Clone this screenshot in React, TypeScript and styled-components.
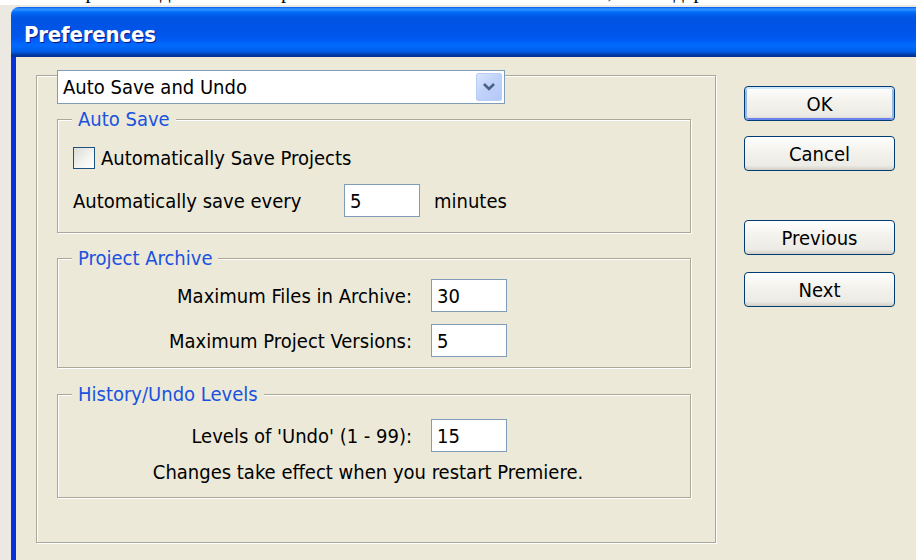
import React, { FC } from 'react';
import styled, { createGlobalStyle } from 'styled-components';

const GlobalStyle = createGlobalStyle`
  html, body {
    margin: 0;
    padding: 0;
    background: #fff;
    overflow: hidden;
  }
`;

const UI_FONT = `"DejaVu Sans Condensed", "DejaVu Sans", "Liberation Sans", sans-serif`;

const Page = styled.div`
  width: 916px;
  height: 560px;
  display: flex;
  flex-direction: column;
  overflow: hidden;
  background: #fff;
`;

// document line above the screenshot, only its descenders stay visible
const DocStrip = styled.div`
  height: 5px;
  overflow: hidden;
  flex-shrink: 0;
`;

const DocLine = styled.div`
  margin-top: -20px;
  padding-left: 52px;
  font-family: "Liberation Serif", serif;
  font-size: 21px;
  line-height: 22px;
  white-space: nowrap;
  color: #000;
`;

const Desktop = styled.div`
  flex: 1;
  display: flex;
  padding: 2px 0 0 11px;
  background: #ebe9e1;
`;

const Window = styled.div`
  flex: 1;
  display: flex;
  flex-direction: column;
  border-top-left-radius: 8px;
  overflow: hidden;
`;

const TitleBar = styled.div`
  height: 50px;
  flex-shrink: 0;
  display: flex;
  align-items: center;
  padding: 4px 0 0 13px;
  box-sizing: border-box;
  background: linear-gradient(
    180deg,
    #0058ee 0%,
    #3593ff 4%,
    #288eff 6%,
    #127dff 8%,
    #036ffc 10%,
    #0262ee 14%,
    #0057e5 20%,
    #0054e3 24%,
    #0055eb 56%,
    #005bf5 66%,
    #026afe 76%,
    #0062ef 86%,
    #0052d6 92%,
    #0040ab 94%,
    #003092 100%
  );
`;

const Title = styled.span`
  font-family: ${UI_FONT};
  font-weight: 700;
  font-size: 22px;
  color: #fff;
  text-shadow: 1px 1px 0 #0a1883;
  letter-spacing: -0.2px;
`;

const Body = styled.div`
  flex: 1;
  display: flex;
  align-items: flex-start;
  padding: 18px 0 0 20px;
  background: #ece9d8;
  border-left: 5px solid;
  border-image: linear-gradient(90deg, #0831d9, #166aee 60%, #0855dd) 1;
  font-family: ${UI_FONT};
  font-size: 20px;
  line-height: 22px;
  color: #000;
`;

const OuterBox = styled.div`
  width: 680px;
  height: 468px;
  box-sizing: border-box;
  flex-shrink: 0;
  padding: 0 24px 0 20px;
  border: 1px solid #aca899;
  box-shadow: 1px 1px 0 #fff, inset 1px 1px 0 #fff;
`;

const Select = styled.div`
  width: 448px;
  height: 34px;
  box-sizing: border-box;
  margin-top: -6px;
  display: flex;
  align-items: center;
  padding: 2px 2px 2px 5px;
  border: 1px solid #7f9db9;
  background: #fff;
`;

const SelectText = styled.span`
  flex: 1;
  line-height: 28px;
`;

const SelectButton = styled.div`
  width: 26px;
  height: 28px;
  box-sizing: border-box;
  display: flex;
  align-items: center;
  justify-content: center;
  border: 1px solid #bacefa;
  border-radius: 2px;
  background: linear-gradient(135deg, #dae6fe 0%, #c1d3fb 45%, #b4c8f6 100%);
`;

const Group = styled.fieldset<{ $top: number }>`
  margin: ${(p) => p.$top}px 0 0 0;
  padding: 0;
  min-width: 0;
  border: 1px solid #aca899;
  box-shadow: 1px 1px 0 #fff, inset 1px 1px 0 #fff;
`;

const Legend = styled.legend`
  margin-left: 14px;
  padding: 0 6px;
  line-height: 20px;
  color: #1a52e0;
  background: #ece9d8;
`;

const GroupContent = styled.div<{ $pt: number; $pb: number; $pl?: number }>`
  display: flex;
  flex-direction: column;
  padding: ${(p) => p.$pt}px 0 ${(p) => p.$pb}px ${(p) => p.$pl ?? 0}px;
`;

const Row = styled.div<{ $gap?: number }>`
  display: flex;
  align-items: center;
  margin-top: ${(p) => p.$gap ?? 0}px;
`;

const Check = styled.span`
  width: 22px;
  height: 22px;
  box-sizing: border-box;
  border: 1px solid #1c5180;
  background: linear-gradient(135deg, #dcdcd7 0%, #f4f4f0 60%, #ffffff 100%);
  margin-right: 6px;
`;

const Label = styled.span<{ $width?: number; $right?: boolean }>`
  width: ${(p) => (p.$width ? `${p.$width}px` : 'auto')};
  text-align: ${(p) => (p.$right ? 'right' : 'left')};
  flex-shrink: 0;
  white-space: nowrap;
`;

const Field = styled.div`
  width: 76px;
  height: 33px;
  box-sizing: border-box;
  display: flex;
  align-items: center;
  padding-left: 5px;
  border: 1px solid #7f9db9;
  background: #fff;
`;

const Note = styled.div`
  margin-top: 8px;
  padding-right: 12px;
  line-height: 24px;
  text-align: center;
  white-space: nowrap;
`;

const Buttons = styled.div`
  display: flex;
  flex-direction: column;
  margin: 11px 0 0 28px;
`;

const Button = styled.button<{ $gap?: number; $default?: boolean }>`
  width: 151px;
  height: 35px;
  margin-top: ${(p) => p.$gap ?? 0}px;
  padding: 0;
  border: 1px solid #003c74;
  border-radius: 4px;
  font-family: ${UI_FONT};
  font-size: 20px;
  color: #000;
  background: linear-gradient(180deg, #ffffff 0%, #f4f3ee 40%, #ecebe6 86%, #d6d0c5 100%);
  box-shadow: ${(p) =>
    p.$default
      ? 'inset 0 2px 0 #cee7ff, inset 2px 0 0 #98b8ea, inset -2px 0 0 #98b8ea, inset 0 -2px 0 #6982ee'
      : 'none'};
`;

const Chevron: FC = () => (
  <svg width="16" height="12" viewBox="0 0 16 12">
    <path d="M3 3 L8 8 L13 3" fill="none" stroke="#4d6185" strokeWidth="2.6" />
  </svg>
);

const App: FC = () => {
  return (
    <Page>
      <GlobalStyle />
      <DocStrip>
        <DocLine>
          Вторая вкладка окна настроек называется Auto Save and Undo, она содержит
        </DocLine>
      </DocStrip>
      <Desktop>
        <Window>
          <TitleBar>
            <Title>Preferences</Title>
          </TitleBar>
          <Body>
            <OuterBox>
              <Select>
                <SelectText>Auto Save and Undo</SelectText>
                <SelectButton>
                  <Chevron />
                </SelectButton>
              </Select>

              <Group $top={5}>
                <Legend>Auto Save</Legend>
                <GroupContent $pt={18} $pb={15} $pl={15}>
                  <Row>
                    <Check />
                    <Label>Automatically Save Projects</Label>
                  </Row>
                  <Row $gap={15}>
                    <Label $width={271}>Automatically save every</Label>
                    <Field>5</Field>
                    <Label style={{ marginLeft: 14 }}>minutes</Label>
                  </Row>
                </GroupContent>
              </Group>

              <Group $top={15}>
                <Legend>Project Archive</Legend>
                <GroupContent $pt={11} $pb={10}>
                  <Row>
                    <Label $width={354} $right>Maximum Files in Archive:</Label>
                    <Field style={{ marginLeft: 19 }}>30</Field>
                  </Row>
                  <Row $gap={12}>
                    <Label $width={354} $right>Maximum Project Versions:</Label>
                    <Field style={{ marginLeft: 19 }}>5</Field>
                  </Row>
                </GroupContent>
              </Group>

              <Group $top={16}>
                <Legend>History/Undo Levels</Legend>
                <GroupContent $pt={15} $pb={13}>
                  <Row>
                    <Label $width={354} $right>Levels of 'Undo' (1 - 99):</Label>
                    <Field style={{ marginLeft: 19 }}>15</Field>
                  </Row>
                  <Note>Changes take effect when you restart Premiere.</Note>
                </GroupContent>
              </Group>
            </OuterBox>

            <Buttons>
              <Button $default>OK</Button>
              <Button $gap={15}>Cancel</Button>
              <Button $gap={49}>Previous</Button>
              <Button $gap={17}>Next</Button>
            </Buttons>
          </Body>
        </Window>
      </Desktop>
    </Page>
  );
};

export default App;
